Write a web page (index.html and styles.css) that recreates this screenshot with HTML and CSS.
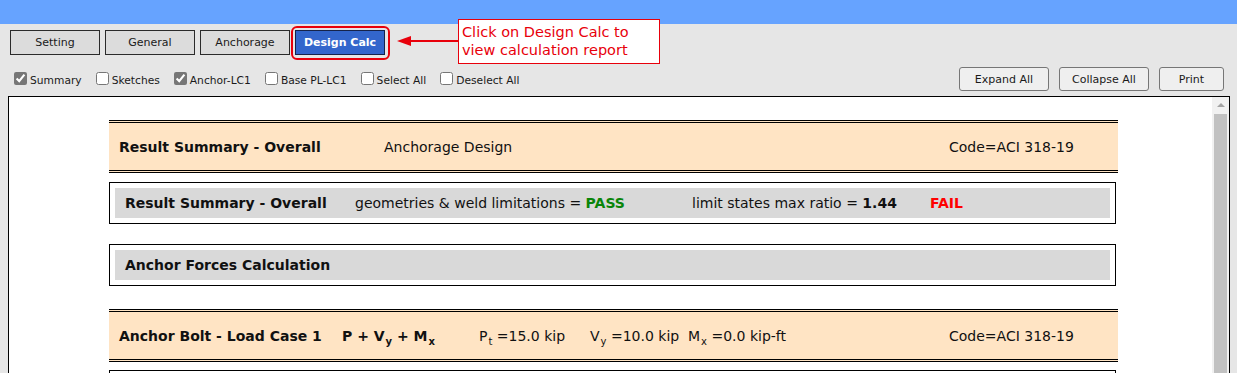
FILE: index.html
```html
<!DOCTYPE html>
<html>
<head>
<meta charset="utf-8">
<link rel="stylesheet" href="styles.css">
</head>
<body>
<div class="topbar"></div>
<div class="toolbar">
  <button class="tab">Setting</button>
  <button class="tab">General</button>
  <button class="tab">Anchorage</button>
  <button class="tab active">Design Calc</button>
  <svg class="arrow" width="62" height="12" viewBox="0 0 62 12"><line x1="10" y1="6" x2="62" y2="6" stroke="#e8000b" stroke-width="2"/><polygon points="0,6 14,1 14,11" fill="#e8000b"/></svg>
  <div class="callout">Click on Design Calc to<br>view calculation report</div>
</div>
<div class="options">
  <div class="checks">
    <label class="chk"><input type="checkbox" checked>Summary</label>
    <label class="chk"><input type="checkbox">Sketches</label>
    <label class="chk"><input type="checkbox" checked>Anchor-LC1</label>
    <label class="chk"><input type="checkbox">Base PL-LC1</label>
    <label class="chk"><input type="checkbox">Select All</label>
    <label class="chk"><input type="checkbox">Deselect All</label>
  </div>
  <div class="actions">
    <button class="act">Expand All</button>
    <button class="act">Collapse All</button>
    <button class="act act-print">Print</button>
  </div>
</div>
<div class="frame">
  <div class="report">
    <div class="sec-orange sec-summary">
      <span class="b">Result Summary - Overall</span>
      <span>Anchorage Design</span>
      <span>Code=ACI 318-19</span>
    </div>
    <div class="sec-box first">
      <div class="bar bar-result">
        <span class="b">Result Summary - Overall</span>
        <span>geometries &amp; weld limitations = <b class="pass">PASS</b></span>
        <span>limit states max ratio = <b>1.44</b></span>
        <b class="fail">FAIL</b>
      </div>
    </div>
    <div class="sec-box second">
      <div class="bar"><span class="b">Anchor Forces Calculation</span></div>
    </div>
    <div class="sec-orange sec-case">
      <span class="b">Anchor Bolt - Load Case 1</span>
      <span class="b">P + V<sub>y</sub> + M<sub>x</sub></span>
      <span>P<sub>t</sub> =15.0 kip</span>
      <span>V<sub>y</sub> =10.0 kip</span>
      <span>M<sub>x</sub> =0.0 kip-ft</span>
      <span>Code=ACI 318-19</span>
    </div>
    <div class="sec-box third"><div class="bar"></div></div>
  </div>
  <div class="scrollbar">
    <div class="sb-arrow"></div>
    <div class="sb-thumb"></div>
  </div>
</div>
</body>
</html>
```
FILE: styles.css
```css
html, body {
  margin: 0;
  height: 373px;
  overflow: hidden;
}
body {
  background: #e6e6e6;
  font-family: "DejaVu Sans", Verdana, sans-serif;
  color: #111;
}
.topbar {
  height: 24px;
  background: #66a3ff;
}
.toolbar {
  position: relative;
  display: flex;
  gap: 5px;
  padding: 6px 0 0 10px;
  height: 25px;
}
.tab {
  width: 90px;
  height: 25px;
  box-sizing: border-box;
  border: 1px solid #2b2b2b;
  background: #dcdcdc;
  font-family: "DejaVu Sans", Verdana, sans-serif;
  font-size: 11px;
  color: #1a1a1a;
  padding: 0;
  margin: 0;
}
.tab.active {
  position: relative;
  background: #3366cc;
  border-color: #16234a;
  color: #fff;
  font-weight: bold;
}
.tab.active::after {
  content: "";
  position: absolute;
  top: -5px;
  left: -5px;
  right: -6px;
  bottom: -6px;
  border: 2px solid #e8000b;
  border-radius: 6px;
}
.arrow {
  position: absolute;
  left: 397px;
  top: 11px;
}
.callout {
  position: absolute;
  left: 458px;
  top: -5px;
  width: 202px;
  height: 45px;
  box-sizing: border-box;
  border: 1px solid #e8000b;
  background: #fff;
  color: #e8000b;
  font-size: 14.5px;
  line-height: 18px;
  padding: 3px 0 0 3px;
  white-space: nowrap;
}
.options {
  display: flex;
  justify-content: space-between;
  align-items: flex-start;
  margin-top: 12px;
  height: 24px;
  padding: 0 13px 0 10px;
}
.checks {
  display: flex;
  gap: 10px;
  align-items: center;
  padding-top: 7px;
}
.chk {
  display: inline-flex;
  align-items: center;
  font-size: 10.7px;
  color: #1a1a1a;
}
.chk input {
  margin: 0 3px 0 4px;
  width: 13px;
  height: 13px;
  accent-color: #767676;
  position: relative;
  top: -2px;
}
.actions {
  display: flex;
  gap: 10px;
}
.act {
  width: 90px;
  height: 24px;
  box-sizing: border-box;
  border: 1px solid #767676;
  border-radius: 3px;
  background: #efefef;
  font-family: "DejaVu Sans", Verdana, sans-serif;
  font-size: 11px;
  color: #1a1a1a;
  padding: 0;
}
.act-print {
  width: 65px;
}
.frame {
  display: flex;
  margin: 5px 7px 0 8px;
  border: 1px solid #000;
  background: #fff;
  height: 300px;
}
.report {
  flex: 1;
  padding: 23px 0 0 100px;
}
.scrollbar {
  width: 17px;
  background: #f1f1f1;
  display: flex;
  flex-direction: column;
  align-items: center;
}
.sb-arrow {
  margin-top: 6px;
  width: 0;
  height: 0;
  border-left: 4px solid transparent;
  border-right: 4px solid transparent;
  border-bottom: 4px solid #a3a3a3;
}
.sb-thumb {
  margin-top: 7px;
  width: 13px;
  flex: 1;
  background: #c1c1c1;
}
.b {
  font-weight: bold;
}
.sec-orange {
  width: 1009px;
  box-sizing: border-box;
  height: 53px;
  border-top: 3px double #000;
  border-bottom: 3px double #000;
  background: #ffe4c4;
  display: flex;
  align-items: center;
  padding-left: 10px;
  font-size: 14px;
  white-space: nowrap;
}
.sec-case {
  margin-top: 23px;
}
.sec-summary span:nth-child(1) { width: 265px; }
.sec-summary span:nth-child(2) { width: 565px; }
.sec-case span:nth-child(1) { width: 223px; }
.sec-case span:nth-child(2) { width: 137px; }
.sec-case span:nth-child(3) { width: 111px; }
.sec-case span:nth-child(4) { width: 98px; }
.sec-case span:nth-child(5) { width: 261px; }
sub {
  font-size: 10px;
  vertical-align: -4px;
  line-height: 0;
  margin-left: 1px;
}
.sec-box {
  width: 1007px;
  box-sizing: border-box;
  border: 1px solid #000;
  padding: 5px;
}
.sec-box.first { margin-top: 9px; }
.sec-box.second { margin-top: 20px; }
.sec-box.third { margin-top: 8px; }
.bar {
  background: #d9d9d9;
  height: 30px;
  display: flex;
  align-items: center;
  padding-left: 10px;
  font-size: 14px;
  white-space: nowrap;
}
.bar-result span:nth-child(1) { width: 230px; }
.bar-result span:nth-child(2) { width: 337px; }
.bar-result span:nth-child(3) { width: 238px; }
.pass { color: #0a850a; }
.fail { color: #ff0000; }
```
